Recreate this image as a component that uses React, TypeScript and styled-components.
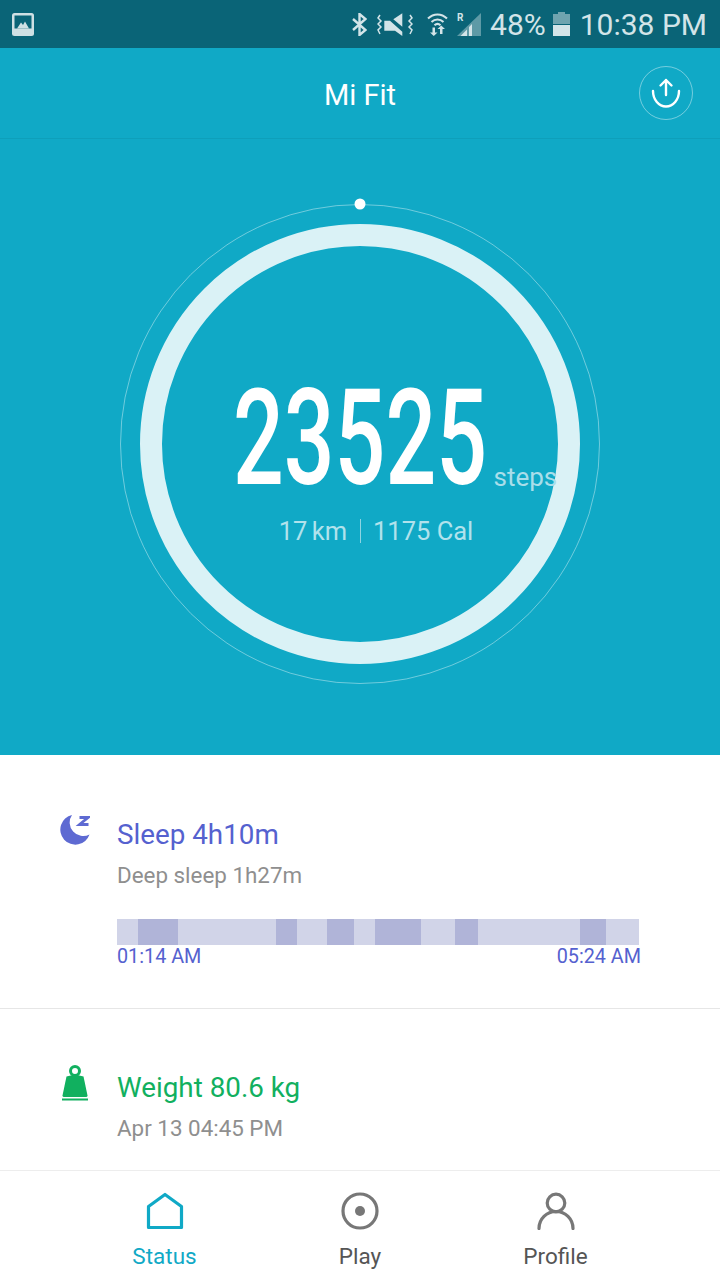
import styled, { createGlobalStyle } from "styled-components";

const GlobalStyle = createGlobalStyle`
  html, body {
    margin: 0;
    padding: 0;
    background: #fff;
  }
  body {
    font-family: Roboto, "Noto Sans", sans-serif;
  }
`;

const Page = styled.div`
  width: 720px;
  height: 1280px;
  overflow: hidden;
  display: flex;
  flex-direction: column;
  background: #fff;
`;

const StatusBar = styled.div`
  height: 48px;
  flex: none;
  display: flex;
  align-items: center;
  justify-content: space-between;
  padding: 0 13px 0 12px;
  background: #0a6477;
  color: #d3e4e8;
`;

const StatusIcons = styled.div`
  display: flex;
  align-items: center;
`;

const StatusText = styled.span<{ $gap: number }>`
  margin-left: ${(p) => p.$gap}px;
  padding-top: 2px;
  font-size: 30px;
  line-height: 46px;
  white-space: nowrap;
`;

const StatusGlyph = styled.svg<{ $gap?: number }>`
  display: block;
  flex: none;
  margin-left: ${(p) => p.$gap ?? 0}px;
`;

const Header = styled.header`
  height: 90px;
  flex: none;
  display: grid;
  grid-template-columns: 1fr auto 1fr;
  align-items: center;
  background: #10a9c6;
  border-bottom: 1px solid #0e9fba;
`;

const Title = styled.h1`
  grid-column: 2;
  margin: 3px 0 0;
  font-size: 29px;
  font-weight: 400;
  color: #fff;
`;

const SyncButton = styled.button`
  justify-self: end;
  margin-right: 27px;
  width: 54px;
  height: 54px;
  padding: 0;
  display: flex;
  align-items: center;
  justify-content: center;
  background: none;
  border: 1px solid rgba(255, 255, 255, 0.42);
  border-radius: 50%;
`;

const Hero = styled.section`
  height: 616px;
  flex: none;
  padding-top: 65px;
  box-sizing: border-box;
  display: flex;
  justify-content: center;
  background: #10a9c6;
`;

const Dial = styled.div`
  position: relative;
  width: 480px;
  height: 480px;
  display: flex;
  flex-direction: column;
  align-items: center;
`;

const RingArt = styled.svg`
  position: absolute;
  inset: 0;
  overflow: visible;
`;

const CountRow = styled.div`
  position: relative;
  margin-top: 172px;
  width: 253px;
  height: 126px;
  display: flex;
  justify-content: center;
`;

const Count = styled.span`
  display: block;
  font-size: 133px;
  line-height: 126px;
  font-weight: 500;
  color: #fff;
  transform: scaleX(0.672);
  white-space: nowrap;
`;

const StepsUnit = styled.span`
  position: absolute;
  left: 260px;
  top: 86px;
  font-size: 26px;
  line-height: 30px;
  color: #a9deea;
`;

const Metrics = styled.div`
  position: relative;
  align-self: stretch;
  margin-top: 14px;
  display: grid;
  grid-template-columns: 1fr auto 1fr;
  align-items: center;
  font-size: 25.5px;
  line-height: 30px;
  color: #b1e2ec;
`;

const MetricLeft = styled.span`
  justify-self: end;
  word-spacing: -2px;
`;

const MetricDivider = styled.span`
  width: 1px;
  height: 24px;
  margin: 0 12px 0 13px;
  background: #8ed4e2;
`;

const InfoRow = styled.section<{ $height: number; $top: number; $divider?: boolean }>`
  height: ${(p) => p.$height}px;
  box-sizing: border-box;
  flex: none;
  display: flex;
  padding: ${(p) => p.$top}px 80px 0 60px;
  border-bottom: ${(p) => (p.$divider ? "1px solid #e6e6e6" : "none")};
`;

const InfoIcon = styled.svg<{ $lift: number }>`
  display: block;
  flex: none;
  width: 30px;
  margin: -${(p) => p.$lift}px 27px 0 0;
`;

const InfoBody = styled.div`
  flex: 1;
  min-width: 0;
`;

const InfoTitle = styled.div<{ $color: string }>`
  font-size: 27.8px;
  line-height: 34px;
  color: ${(p) => p.$color};
`;

const InfoSub = styled.div`
  margin-top: 10px;
  font-size: 22.4px;
  line-height: 26px;
  color: #8f8f8f;
`;

const SleepBar = styled.div`
  display: flex;
  height: 26px;
  margin-top: 31px;
`;

const SleepSegment = styled.div<{ $deep: boolean }>`
  background: ${(p) => (p.$deep ? "#b0b4d8" : "#d1d4e8")};
`;

const SleepTimes = styled.div`
  display: flex;
  justify-content: space-between;
  margin: 1px -1px 0 0;
  font-size: 19.8px;
  line-height: 22px;
  color: #5561cf;
`;

const TabBar = styled.nav`
  flex: none;
  height: 110px;
  box-sizing: border-box;
  padding-top: 21px;
  display: flex;
  justify-content: center;
  border-top: 1px solid #ededed;
`;

const Tab = styled.div<{ $active?: boolean }>`
  width: 195.5px;
  display: flex;
  flex-direction: column;
  align-items: center;
  font-size: 22.5px;
  line-height: 26px;
  color: ${(p) => (p.$active ? "#10a9c6" : "#555")};
`;

const TabIcon = styled.svg`
  display: block;
  margin-bottom: 13px;
`;

const segments = [
  { w: 21, deep: false },
  { w: 40, deep: true },
  { w: 98, deep: false },
  { w: 21, deep: true },
  { w: 30, deep: false },
  { w: 27, deep: true },
  { w: 21, deep: false },
  { w: 46, deep: true },
  { w: 34, deep: false },
  { w: 23, deep: true },
  { w: 102, deep: false },
  { w: 26, deep: true },
  { w: 33, deep: false },
];

export default function App() {
  return (
    <>
      <GlobalStyle />
      <Page>
        <StatusBar>
          <StatusGlyph width="22" height="23" viewBox="0 0 22 23">
            <rect width="22" height="23" rx="2.5" fill="#cfe0e4" />
            <rect x="2.5" y="2.5" width="17" height="13" fill="#0a6477" />
            <path d="M5 15.5 9 9.5 11 12 13 8.5 17 15.5Z" fill="#cfe0e4" />
          </StatusGlyph>
          <StatusIcons>
            <StatusGlyph width="15" height="23" viewBox="0 0 15 23">
              <path d="M1 6 13.5 17 7.5 22V1L13.5 6 1 17" fill="none" stroke="#d3e4e8" strokeWidth="2.4" />
            </StatusGlyph>
            <StatusGlyph $gap={10} width="36" height="24" viewBox="0 0 36 24">
              <g fill="none" stroke="#d3e4e8" strokeWidth="1.5">
                <path d="M3 3 1 6 4 9 1 12 4 15 1 18 3 22" />
                <path d="M33 3 35 6 32 9 35 12 32 15 35 18 33 22" />
              </g>
              <path d="M16.3 7.3 25.3 1.3V14.7ZM7.3 8.7H13L25.3 19.7V24L18 18.7H7.3Z" fill="#d3e4e8" />
            </StatusGlyph>
            <StatusGlyph $gap={14} width="21" height="24" viewBox="0 0 21 24">
              <g fill="none" stroke="#d3e4e8" strokeWidth="2">
                <path d="M1 6.5C6.5 1 14.5 1 20 6.5" />
                <path d="M4.5 10C8 6.5 13 6.5 16.5 10" />
                <path d="M7.5 13.2C9.3 11.6 11.7 11.6 13.5 13.2" />
              </g>
              <path d="M8 15.5V20.5H10.5L6.8 24 3 20.5H5.5V15.5ZM14.2 13.5 18 17H15.5V22H13V17H10.5Z" fill="#d3e4e8" />
            </StatusGlyph>
            <StatusGlyph $gap={9} width="24" height="23" viewBox="0 0 24 23">
              <path d="M24 0V23H0Z" fill="#d3e4e8" opacity="0.42" />
              <path d="M10 16.5V23H3.5ZM15 11V23H12V14Z" fill="#d3e4e8" />
              <text x="0" y="8" fontFamily="Roboto, sans-serif" fontSize="10" fontWeight="700" fill="#d3e4e8">R</text>
            </StatusGlyph>
            <StatusText $gap={9}>48%</StatusText>
            <StatusGlyph $gap={7} width="17" height="24" viewBox="0 0 17 24">
              <path d="M5 0H12V2H17V12H0V2H5Z" fill="#d3e4e8" opacity="0.5" />
              <rect y="13" width="17" height="11" fill="#d3e4e8" />
            </StatusGlyph>
            <StatusText $gap={10}>10:38 PM</StatusText>
          </StatusIcons>
        </StatusBar>

        <Header>
          <Title>Mi Fit</Title>
          <SyncButton>
            <svg width="32" height="32" viewBox="0 0 32 32" fill="none" stroke="#fff" strokeWidth="2.4" strokeLinecap="round" strokeLinejoin="round">
              <path d="M16 3V18M10.5 8.5 16 3 21.5 8.5" />
              <path d="M3 14A13 15.5 0 0 0 29 14" />
            </svg>
          </SyncButton>
        </Header>

        <Hero>
          <Dial>
            <RingArt width="480" height="480" viewBox="0 0 480 480" fill="none">
              <circle cx="240" cy="240" r="239.5" stroke="rgba(255,255,255,0.4)" />
              <circle cx="240" cy="240" r="209" stroke="#daf2f6" strokeWidth="22" />
              <circle cx="240" cy="0" r="5.5" fill="#fff" />
            </RingArt>
            <CountRow>
              <Count>23525</Count>
              <StepsUnit>steps</StepsUnit>
            </CountRow>
            <Metrics>
              <MetricLeft>17 km</MetricLeft>
              <MetricDivider />
              <span>1175 Cal</span>
            </Metrics>
          </Dial>
        </Hero>

        <InfoRow $height={254} $top={63} $divider>
          <InfoIcon $lift={3} height="30" viewBox="0 0 30 30">
            <path d="M12 0A15 15 0 1 0 29.5 19.5 13.5 13.5 0 0 1 12 0Z" fill="#5e6ad2" />
            <path d="M19.5 2.5H28L19.5 9.5H28.5" fill="none" stroke="#5e6ad2" strokeWidth="2.8" />
          </InfoIcon>
          <InfoBody>
            <InfoTitle $color="#5561cf">Sleep 4h10m</InfoTitle>
            <InfoSub>Deep sleep 1h27m</InfoSub>
            <SleepBar>
              {segments.map((s, i) => (
                <SleepSegment key={i} $deep={s.deep} style={{ width: s.w }} />
              ))}
            </SleepBar>
            <SleepTimes>
              <span>01:14 AM</span>
              <span>05:24 AM</span>
            </SleepTimes>
          </InfoBody>
        </InfoRow>

        <InfoRow $height={161} $top={62}>
          <InfoIcon $lift={6} height="36" viewBox="0 0 30 36">
            <circle cx="15" cy="6" r="4.5" fill="none" stroke="#11b05f" strokeWidth="3" />
            <path d="M6.5 11.5Q15 9 23.5 11.5L27.5 30.5Q27.5 32 26 32H4Q2.5 32 2.5 30.5Z" fill="#11b05f" />
            <rect x="2" y="33.5" width="26" height="2" fill="#11b05f" />
          </InfoIcon>
          <InfoBody>
            <InfoTitle $color="#11b05f">Weight 80.6 kg</InfoTitle>
            <InfoSub>Apr 13 04:45 PM</InfoSub>
          </InfoBody>
        </InfoRow>

        <TabBar>
          <Tab $active>
            <TabIcon width="38" height="38" viewBox="0 0 38 38" fill="none" stroke="#10a9c6" strokeWidth="3.2" strokeLinejoin="round">
              <path d="M19 2.5 35.5 14.5V35.5H2.5V14.5Z" />
            </TabIcon>
            Status
          </Tab>
          <Tab>
            <TabIcon width="38" height="38" viewBox="0 0 38 38" fill="none" stroke="#777" strokeWidth="3.2">
              <circle cx="19" cy="19" r="17" />
              <circle cx="19" cy="19" r="5" fill="#777" stroke="none" />
            </TabIcon>
            Play
          </Tab>
          <Tab>
            <TabIcon width="38" height="38" viewBox="0 0 38 38" fill="none" stroke="#777" strokeWidth="3.2" strokeLinecap="round">
              <circle cx="19" cy="11" r="8.8" />
              <path d="M2 36.5A17 17 0 0 1 36 36.5" />
            </TabIcon>
            Profile
          </Tab>
        </TabBar>
      </Page>
    </>
  );
}
